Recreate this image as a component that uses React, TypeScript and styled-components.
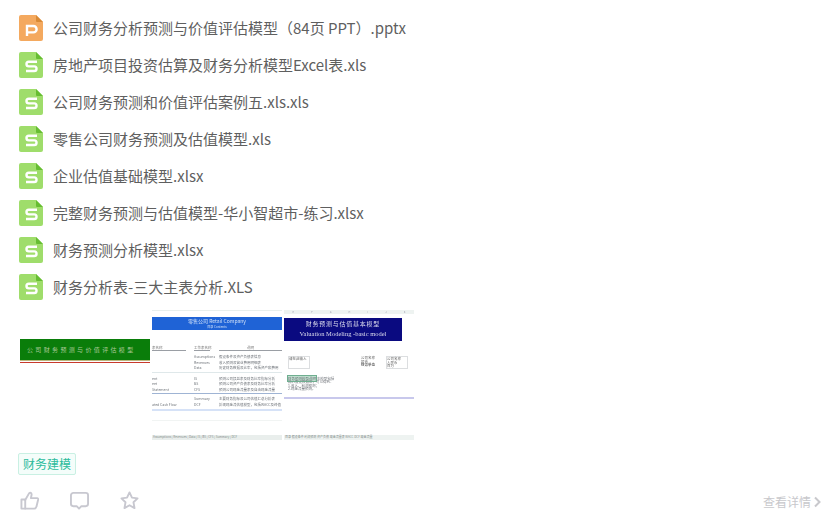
import styled, { createGlobalStyle } from "styled-components";

const GlobalStyle = createGlobalStyle`
  html, body {
    margin: 0;
    padding: 0;
    background: #fff;
  }
  body {
    font-family: "Noto Sans CJK SC", "Liberation Sans", sans-serif;
  }
`;

const Page = styled.div`
  width: 839px;
  height: 529px;
  padding: 15px 18px 0 19px;
  box-sizing: border-box;
  overflow: hidden;
`;

const FileList = styled.div`
  display: flex;
  flex-direction: column;
  gap: 11px;
`;

const FileRow = styled.div`
  display: flex;
  align-items: center;
  gap: 10px;
  height: 26px;
`;

const FileName = styled.span`
  font-size: 15px;
  line-height: 26px;
  color: #5f5f5f;
  white-space: pre;
`;

const Gallery = styled.div`
  display: flex;
  gap: 2px;
  margin: 10px 0 0 1px;
`;

const Thumb = styled.div`
  width: 130px;
  height: 130px;
  overflow: hidden;
  display: flex;
  flex-direction: column;
  position: relative;
  background: #fff;
`;

/* first picture: green title banner */
const CoverThumb = styled(Thumb)`
  padding-top: 29px;
  box-sizing: border-box;
`;

const GreenBanner = styled.div`
  height: 21px;
  background: #0a7d0a;
  border-bottom: 1px solid #b9b77e;
  color: #a9c898;
  font-size: 6px;
  line-height: 21px;
  letter-spacing: 2.35px;
  padding-left: 7px;
  white-space: nowrap;
`;

const RedRule = styled.div`
  height: 1px;
  margin-top: 1px;
  background: #c8392c;
`;

/* second picture: contents sheet */
const SheetBody = styled.div`
  display: flex;
  flex-direction: column;
  filter: blur(0.3px);
`;

const SheetTop = styled.div`
  height: 1px;
  background: #e8efed;
`;

const BlueTitle = styled.div<{ $h: number; $size: number; $mt: number }>`
  height: ${(p) => p.$h}px;
  margin-top: ${(p) => p.$mt}px;
  background: #1f63d6;
  color: #cfe0f8;
  text-align: center;
  font-size: ${(p) => p.$size}px;
  line-height: ${(p) => p.$h}px;
  white-space: nowrap;
`;

const HeadRow = styled.div`
  display: grid;
  grid-template-columns: 34px 8px 16px 9px 63px;
  margin-top: 15px;
  font-size: 3.5px;
  line-height: 5px;
  color: #777;
`;

const HeadCell = styled.span<{ $col: number; $center?: boolean }>`
  grid-column: ${(p) => p.$col};
  border-bottom: 1px solid #9a9ea4;
  white-space: nowrap;
  text-align: ${(p) => (p.$center ? "center" : "left")};
`;

const SheetRows = styled.div<{ $mt: number; $tint?: string }>`
  display: flex;
  flex-direction: column;
  margin-top: ${(p) => p.$mt}px;
  padding-bottom: 1px;
  border-bottom: 1px solid ${(p) => p.$tint || "#dfe8ea"};
`;

const SheetRow = styled.div`
  display: grid;
  grid-template-columns: 42px 25px 63px;
  height: 5.5px;
  font-size: 3.5px;
  line-height: 5.5px;
  color: #6d7278;
  white-space: nowrap;
`;

const PaleBar = styled.div`
  height: 2px;
  background: #d6e2f7;
`;

const FaintRule = styled.div`
  height: 1px;
  margin-top: 9px;
  background: #f1f4f3;
`;

const TabStrip = styled.div<{ $bg: string }>`
  position: absolute;
  left: 0;
  right: 0;
  bottom: 0;
  height: 5px;
  padding-left: 1px;
  background: ${(p) => p.$bg};
  color: #848d8b;
  font-size: 3px;
  line-height: 5px;
  white-space: nowrap;
`;

/* third picture: valuation sheet */
const ColumnHeads = styled.div`
  height: 4px;
  background: #eef3f1;
  color: #99a;
  font-size: 2.5px;
  line-height: 4px;
  display: flex;
  justify-content: space-around;
`;

const NavyTitle = styled.div`
  width: 118px;
  height: 23px;
  margin-top: 4px;
  padding-top: 1px;
  box-sizing: border-box;
  background: #0a0a80;
  color: #dcdcec;
  text-align: center;
  font-family: "Liberation Serif", "Noto Sans CJK SC", serif;
`;

const NavyLine = styled.div<{ $size: number; $track: number }>`
  font-size: ${(p) => p.$size}px;
  letter-spacing: ${(p) => p.$track}px;
  line-height: 10px;
  white-space: nowrap;
`;

const FormArea = styled.div`
  display: flex;
  justify-content: space-between;
  margin-top: 15px;
  padding: 0 6px 0 4px;
  font-size: 3.5px;
  line-height: 3.5px;
  color: #666;
  white-space: nowrap;
`;

const FormColumn = styled.div`
  display: flex;
  gap: 11px;
`;

const BoxStack = styled.div`
  display: flex;
  flex-direction: column;
  width: 20px;
  border: 1px solid #dcdee0;
`;

const NoteBlock = styled.div`
  margin: 8px 0 0 4px;
  font-size: 3.5px;
  line-height: 3.5px;
  color: #70747a;
  white-space: nowrap;
`;

const NoteTag = styled.span`
  background: #bfe0cf;
  outline: 1px solid #6fae90;
`;

const LavenderRule = styled.div`
  height: 2px;
  margin-top: 6.5px;
  background: #c8c8ec;
`;

const TagRow = styled.div`
  display: flex;
  margin: 13px 0 0 -1px;
`;

const Tag = styled.span`
  height: 20px;
  padding: 0 4px;
  border: 1px solid #c9f0e3;
  border-radius: 2px;
  background: #f4fdfa;
  color: #2cbb9c;
  font-size: 12px;
  line-height: 20px;
`;

const Footer = styled.div`
  display: flex;
  align-items: center;
  justify-content: space-between;
  margin: 15px 0 0 1px;
`;

const Actions = styled.div`
  display: flex;
  gap: 31px;
`;

const ActionIcon = styled.svg`
  display: block;
  width: 19px;
  height: 19px;
  fill: none;
  stroke: #c8c8d0;
  stroke-width: 2;
  stroke-linejoin: round;
  stroke-linecap: round;
`;

const Details = styled.span`
  display: flex;
  align-items: center;
  gap: 3px;
  margin-top: 4px;
  font-size: 12px;
  line-height: 16px;
  color: #c8c8cc;
`;

const files = [
  { kind: "P", name: "公司财务分析预测与价值评估模型（84页 PPT）.pptx" },
  { kind: "S", name: "房地产项目投资估算及财务分析模型Excel表.xls" },
  { kind: "S", name: "公司财务预测和价值评估案例五.xls.xls" },
  { kind: "S", name: "零售公司财务预测及估值模型.xls" },
  { kind: "S", name: "企业估值基础模型.xlsx" },
  { kind: "S", name: "完整财务预测与估值模型-华小智超市-练习.xlsx" },
  { kind: "S", name: "财务预测分析模型.xlsx" },
  { kind: "S", name: "财务分析表-三大主表分析.XLS" },
];

const FileIcon = ({ kind }: { kind: string }) => {
  const body = kind === "P" ? "#f4a95f" : "#9fdd6b";
  const fold = kind === "P" ? "#d98a36" : "#66bd32";
  return (
    <svg width="24" height="26" viewBox="0 0 24 26" style={{ flex: "none" }}>
      <path
        d="M2 0H17L24 7V24a2 2 0 0 1-2 2H2a2 2 0 0 1-2-2V2a2 2 0 0 1 2-2Z"
        fill={body}
      />
      <path d="M17 0L24 7H18a1 1 0 0 1-1-1Z" fill={fold} />
      {kind === "P" ? (
        <path
          d="M8 21V11H14.4a3.1 3.1 0 0 1 0 6.4H8"
          fill="none"
          stroke="#fff"
          strokeWidth="2.4"
        />
      ) : (
        <path
          d="M18 9.7H9.8a2.3 2.3 0 0 0 0 4.65H15.2a2.3 2.3 0 0 1 0 4.65H7"
          fill="none"
          stroke="#fff"
          strokeWidth="2.4"
        />
      )}
    </svg>
  );
};

const App = () => {
  return (
    <Page>
      <GlobalStyle />
      <FileList>
        {files.map((file) => (
          <FileRow key={file.name}>
            <FileIcon kind={file.kind} />
            <FileName>{file.name}</FileName>
          </FileRow>
        ))}
      </FileList>

      <Gallery>
        <CoverThumb>
          <GreenBanner>公司财务预测与价值评估模型</GreenBanner>
          <RedRule />
        </CoverThumb>

        <Thumb>
          <SheetBody>
            <SheetTop />
            <BlueTitle $h={8} $size={5} $mt={6}>
              零售公司 Retail Company
            </BlueTitle>
            <BlueTitle $h={5} $size={3} $mt={0}>
              目录 Contents
            </BlueTitle>
            <HeadRow>
              <HeadCell $col={1}>表名称</HeadCell>
              <HeadCell $col={3}>工作表名称</HeadCell>
              <HeadCell $col={5} $center>
                说明
              </HeadCell>
            </HeadRow>
            <SheetRows $mt={3}>
              <SheetRow>
                <span />
                <span>Assumptions</span>
                <span>假设条件及资产负债表信息</span>
              </SheetRow>
              <SheetRow>
                <span />
                <span>Revenues</span>
                <span>收入预测及营业费用明细表</span>
              </SheetRow>
              <SheetRow>
                <span />
                <span>Data</span>
                <span>历史财务数据及比率，包括资产和费用</span>
              </SheetRow>
            </SheetRows>
            <SheetRows $mt={3} $tint="#9fb4d4">
              <SheetRow>
                <span>ent</span>
                <span>IS</span>
                <span>预测公司损益表及财务比率指标分析</span>
              </SheetRow>
              <SheetRow>
                <span>eet</span>
                <span>BS</span>
                <span>预测公司资产负债表及财务比率分析</span>
              </SheetRow>
              <SheetRow>
                <span>Statement</span>
                <span>CFS</span>
                <span>预测公司现金流量表及自由现金流量</span>
              </SheetRow>
            </SheetRows>
            <SheetRows $mt={2} $tint="#fff">
              <SheetRow>
                <span />
                <span>Summary</span>
                <span>主要财务指标及公司估值汇总分析表</span>
              </SheetRow>
              <SheetRow>
                <span>ated Cash Flow</span>
                <span>DCF</span>
                <span>折现现金流估值模型，包括WACC及终值</span>
              </SheetRow>
            </SheetRows>
            <PaleBar />
            <FaintRule />
          </SheetBody>
          <TabStrip $bg="#e9eeec">
            Assumptions | Revenues | Data | IS | BS | CFS | Summary | DCF
          </TabStrip>
        </Thumb>

        <Thumb>
          <SheetBody>
            <ColumnHeads>
              <span>E</span>
              <span>F</span>
              <span>G</span>
              <span>H</span>
              <span>I</span>
              <span>J</span>
              <span>K</span>
            </ColumnHeads>
            <NavyTitle>
              <NavyLine $size={6} $track={0.75}>
                财务预测与估值基本模型
              </NavyLine>
              <NavyLine $size={6.5} $track={0}>
                Valuation Modeling -basic model
              </NavyLine>
            </NavyTitle>
            <FormArea>
              <BoxStack>
                <span>请在此输入</span>
                <span>&nbsp;</span>
                <span>&nbsp;</span>
              </BoxStack>
              <FormColumn>
                <div>
                  公司名称
                  <br />
                  报告
                  <br />
                  <b>财务单位</b>
                </div>
                <BoxStack>
                  <span>公司名称</span>
                  <span>人民币</span>
                  <span>百万</span>
                </BoxStack>
              </FormColumn>
            </FormArea>
            <NoteBlock>
              <NoteTag>财务预测模型说明</NoteTag> 本模型包括
              <br />
              输入假设数据后，可以得到：
              <br />
              1.收入、利润预测；
              <br />
              2.现金流量预测。
            </NoteBlock>
            <LavenderRule />
          </SheetBody>
          <TabStrip $bg="#eef3f1">
            目录 假设条件 利润预测 资产负债 现金流量表 WACC DCF 现金流量
          </TabStrip>
        </Thumb>
      </Gallery>

      <TagRow>
        <Tag>财务建模</Tag>
      </TagRow>

      <Footer>
        <Actions>
          <ActionIcon viewBox="0 0 20 20">
            <path d="M1.5 9H5.5V18.5H1.5Z" />
            <path d="M5.5 9.5L9.5 2.5C10.8 1.2 12.4 2 12.2 4L11.5 7.5H18C19 7.5 19.2 8.5 19 9.5L17.3 16.5C17 18 16.2 18.5 15 18.5H5.5" />
          </ActionIcon>
          <ActionIcon viewBox="0 0 20 20">
            <path d="M3.5 2H16.5A2.5 2.5 0 0 1 19 4.5V13.5A2.5 2.5 0 0 1 16.5 16H12L9.5 18.5L7 16H3.5A2.5 2.5 0 0 1 1 13.5V4.5A2.5 2.5 0 0 1 3.5 2Z" />
          </ActionIcon>
          <ActionIcon viewBox="0 0 20 20">
            <path d="M10 1.5L12.6 7L18.5 7.8L14.2 11.9L15.3 18L10 15L4.7 18L5.8 11.9L1.5 7.8L7.4 7Z" />
          </ActionIcon>
        </Actions>
        <Details>
          查看详情
          <svg width="7" height="12" viewBox="0 0 7 12" fill="none" stroke="#c8c8cc" strokeWidth="2">
            <path d="M1 1.5L5.5 6L1 10.5" />
          </svg>
        </Details>
      </Footer>
    </Page>
  );
};

export default App;
